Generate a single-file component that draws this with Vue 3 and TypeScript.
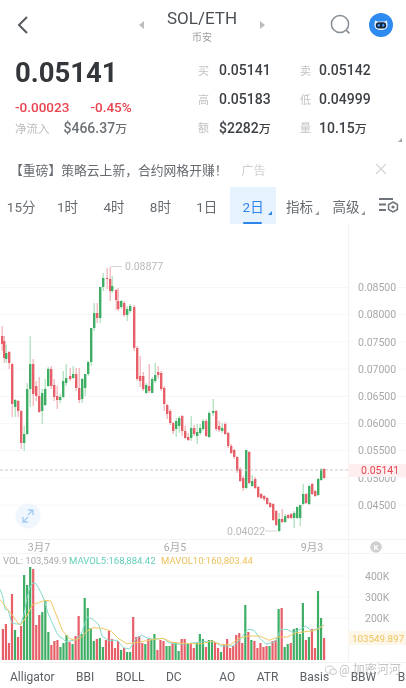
<script setup lang="ts">
type Cdl = [number, 'r' | 'g', number, number, number, number]

// x, colour, body top, body bottom, wick top, wick bottom
const candles: Cdl[] = [
  [1,'r',335,343,325,350],[3,'r',340,357,335,362],[5,'g',352,358,344,362],[8,'r',351,362,350,368],
  [11,'r',363,403,362,416],[14,'g',399,406,398,416],[17,'r',400,410,399,416],[20,'r',410,442,409,448],
  [23,'g',433,442,425,450],[26,'g',388,433,382,434],[29,'g',363,388,335,406],[32,'r',363,393,358,405],
  [35,'r',385,395,380,400],[38,'r',395,411,376,412],[41,'g',392,410,388,423],[44,'g',388,404,378,405],
  [47,'g',368,385,366,386],[50,'r',368,385,365,388],[53,'r',384,396,378,400],[56,'r',395,399,385,408],
  [59,'g',396,399,393,402],[62,'g',380,396,370,397],[65,'g',377,382,363,385],[69,'r',375,378,367,380],
  [72,'g',373,377,365,378],[75,'r',373,387,367,390],[78,'r',387,399,367,402],[81,'g',378,398,377,402],
  [84,'g',373,387,373,395],[87,'g',361,373,360,375],[90,'g',327,361,327,365],[93,'g',312,327,302,330],
  [96,'r',312,317,302,322],[99,'g',286,317,286,322],[102,'g',277,286,272,290],[106,'r',277,278,267,288],
  [109,'r',278,290,266,300],[111,'g',285,290,275,292],[115,'r',289,299,288,309],[117,'r',300,308,287,310],
  [120,'g',300,306,299,308],[123,'r',302,314,300,316],[126,'g',308,314,305,320],[129,'g',305,310,303,312],
  [133,'r',306,347,304,350],[136,'r',347,378,345,380],[139,'r',375,380,355,386],[142,'r',375,388,371,390],
  [145,'g',384,392,382,393],[148,'r',385,390,363,392],[151,'g',378,392,376,392],[154,'g',374,380,362,382],
  [157,'r',371,374,365,378],[160,'r',372,388,370,390],[163,'r',387,403,385,410],[166,'r',404,413,403,418],
  [169,'r',410,422,408,424],[172,'r',422,430,421,433],[175,'g',420,428,417,436],[178,'g',417,425,415,432],
  [181,'r',415,430,414,435],[184,'r',430,437,425,438],[187,'r',436,439,432,440],[190,'g',427,437,415,440],
  [193,'r',427,433,424,435],[196,'g',431,435,423,443],[199,'g',427,432,423,434],[202,'g',420,428,418,430],
  [205,'r',420,435,418,436],[208,'g',412,436,410,437],[212,'g',410,412,398,415],[215,'r',410,428,409,430],
  [218,'r',425,429,420,431],[221,'g',427,430,422,432],[224,'r',423,433,421,434],[227,'r',432,445,431,447],
  [230,'r',445,452,443,453],[233,'r',449,456,448,458],[236,'r',456,470,455,472],[239,'r',468,480,466,481],
  [242,'r',477,487,475,490],[245,'g',449,487,449,488],[248,'r',451,482,450,483],[251,'g',480,485,474,486],
  [254,'r',478,487,476,488],[257,'r',486,496,485,497],[260,'r',493,497,492,498],[263,'r',495,498,494,500],
  [266,'r',497,503,496,504],[269,'r',502,506,501,507],[272,'r',503,519,502,520],[275,'r',510,524,509,525],
  [278,'g',518,530,512,531],[281,'r',518,521,508,522],[284,'g',515,521,513,522],[287,'r',514,517,513,518],
  [290,'r',513,517,512,518],[293,'g',512,517,510,527],[296,'g',506,517,505,518],[299,'g',504,517,504,525],
  [302,'g',493,503,483,504],[305,'r',493,502,492,503],[308,'g',485,503,484,504],[311,'r',483,493,482,494],
  [314,'r',490,495,489,496],[317,'g',478,494,477,495],[320,'g',468,479,467,480],[323,'r',468,477,467,478]
]

const prices = ['0.08500','0.08000','0.07500','0.07000','0.06500','0.06000','0.05500','0.05000','0.04500']
const priceRows = prices.map((text, i) => ({ text, y: 286.5 + i * 27.2 }))

// bar heights in px, one per candle slot
const bars: [string, number][] = [
  ['r',31],['r',36],['r',17],['r',66],['g',30],['r',23],['r',34],['g',85],['g',75],['g',93],['r',91],['r',35],
  ['r',45],['g',48],['g',59],['g',28],['r',15],['r',19],['r',20],['g',13],['g',17],['g',25],['r',18],['g',16],
  ['r',24],['r',44],['g',26],['g',62],['g',52],['g',32],['g',19],['r',21],['g',22],['g',13],['r',20],['r',29],
  ['r',21],['r',12],['r',19],['g',10],['r',12],['g',8],['g',8],['r',43],['r',23],['r',24],['r',17],['g',16],
  ['r',21],['g',21],['g',26],['r',10],['r',20],['r',19],['g',14],['g',14],['r',18],['g',18],['g',9],['r',21],
  ['r',21],['g',17],['r',17],['r',12],['g',17],['g',26],['g',21],['r',13],['g',20],['g',20],['r',18],['r',12],
  ['g',8],['r',15],['r',21],['r',12],['r',14],['r',25],['r',27],['r',17],['g',55],['r',28],['g',20],['r',19],
  ['r',12],['r',17],['r',13],['r',14],['g',14],['r',19],['r',20],['g',51],['r',52],['g',13],['g',16],['r',17],
  ['g',31],['g',32],['g',26],['g',57],['r',20],['g',23],['r',31],['r',12],['g',69],['g',42],['r',22]
]

const barRects = bars.map(([c, h], i) => ({
  x: 1.8 + i * 3.03,
  y: 659 - h,
  h,
  fill: c === 'r' ? '#e65f69' : '#3fae65'
}))

const toLine = (pts: number[][], dx = 0) =>
  pts.map(([x, y]) => `${(dx + x / 3).toFixed(1)},${(550 + y / 3).toFixed(1)}`).join(' ')

const mav5 =
  toLine([[0,115],[8,135],[15,175],[25,178],[35,215],[44,218],[62,220],[72,190],[80,145],[89,110],[98,96],[107,97],[116,112],[125,130],[134,150],[143,185],[152,205],[161,225],[170,245],[179,258],[188,262],[197,272],[207,270],[225,268],[243,250],[252,225],[262,198],[279,205],[297,222],[306,255],[325,268],[352,268],[370,290],[389,294],[407,265],[425,252],[444,262],[462,265],[489,262],[507,275],[534,280],[562,278],[607,272]]) +
  ' ' +
  toLine([[17,272],[35,272],[53,285],[72,285],[90,285],[108,270],[126,245],[135,235],[153,238],[171,262],[189,280],[216,272],[234,235],[252,235],[271,245],[298,232],[308,225],[326,240],[344,232],[362,222]], 203)

const mav10 =
  toLine([[0,145],[15,165],[35,190],[53,215],[62,222],[80,195],[98,160],[116,155],[134,148],[152,150],[170,195],[188,240],[207,262],[225,268],[243,260],[262,240],[279,230],[306,232],[334,240],[352,260],[380,278],[407,275],[434,270],[462,265],[489,262],[516,274],[562,278],[607,278]]) +
  ' ' +
  toLine([[26,270],[53,280],[81,282],[108,262],[135,255],[171,255],[198,268],[225,258],[252,258],[280,245],[298,243],[326,240],[344,235],[362,223]], 203)

const tabs = ['15分', '1时', '4时', '8时', '1日', '2日', '指标', '高级']
const activeTab = '2日'
const cornered = ['2日', '指标', '高级']
const indicators = ['Alligator', 'BBI', 'BOLL', 'DC', 'AO', 'ATR', 'Basis', 'BBW', 'B']
const stats = [
  ['买', '0.05141', '', '卖', '0.05142', ''],
  ['高', '0.05183', '', '低', '0.04999', ''],
  ['额', '$2282', '万', '量', '10.15', '万']
]
</script>

<template>
  <div class="page">
    <header class="topbar">
      <svg class="back" width="16" height="22" viewBox="0 0 16 22">
        <path d="M12 3 4 11l8 8" fill="none" stroke="#555b61" stroke-width="2" />
      </svg>
      <div class="title">
        <i class="tri tri-l"></i>
        <div class="title-text">
          <div class="pair">SOL/ETH</div>
          <div class="venue">币安</div>
        </div>
        <i class="tri tri-r"></i>
      </div>
      <svg class="search" width="24" height="24" viewBox="0 0 24 24">
        <circle cx="11" cy="11" r="8.6" fill="none" stroke="#868e96" stroke-width="1.5" />
        <path d="m17.4 17.4 3 3" stroke="#868e96" stroke-width="1.6" />
      </svg>
      <svg class="bot" width="24" height="24" viewBox="0 0 24 24">
        <circle cx="12" cy="12" r="12" fill="#2f8bf0" />
        <path d="M6 7.5 8.8 8.6h6.4L18 7.5l.6 4.5c0 3-2.6 5-6.6 5s-6.6-2-6.6-5z" fill="#e9f3fd" />
        <rect x="6.8" y="9.2" width="10.4" height="6.2" rx="3" fill="#17263f" />
        <ellipse cx="9.8" cy="12.2" rx="1.2" ry="1.5" fill="#3f9bf5" />
        <ellipse cx="14.2" cy="12.2" rx="1.2" ry="1.5" fill="#3f9bf5" />
      </svg>
    </header>

    <section class="quote">
      <div class="quote-left">
        <div class="last">0.05141</div>
        <div class="change"><span>-0.00023</span><span>-0.45%</span></div>
        <div class="inflow"><span class="inflow-label">净流入</span><span class="inflow-val">$466.37<small>万</small></span></div>
      </div>
      <div class="stats">
        <div v-for="row in stats" :key="row[0]" class="stat-row">
          <span class="stat-k">{{ row[0] }}</span>
          <span class="stat-v">{{ row[1] }}<small v-if="row[2]">{{ row[2] }}</small></span>
          <span class="stat-k stat-k2">{{ row[3] }}</span>
          <span class="stat-v">{{ row[4] }}<small v-if="row[5]">{{ row[5] }}</small></span>
        </div>
      </div>
      <i class="corner corner-quote"></i>
    </section>

    <div class="ad">
      <span class="ad-text">【重磅】策略云上新，合约网格开赚！</span>
      <span class="ad-tag">广告</span>
      <svg class="ad-close" width="12" height="12" viewBox="0 0 12 12">
        <path d="m1 1 10 10M11 1 1 11" stroke="#d4d4d4" stroke-width="1.1" />
      </svg>
    </div>

    <nav class="tabs">
      <div v-for="t in tabs" :key="t" class="tab" :class="{ active: t === activeTab }">
        {{ t }}
        <i v-if="cornered.includes(t)" class="corner"></i>
      </div>
      <svg class="tab-set" width="20" height="16" viewBox="0 0 20 16">
        <path d="M0 2h14M0 7.5h7M0 13h7" stroke="#6e7479" stroke-width="2" />
        <path d="m14 5 4.4 2.5v5L14 15l-4.4-2.5v-5z" fill="none" stroke="#6e7479" stroke-width="1.5" />
        <circle cx="14" cy="10" r="1.6" fill="#6e7479" />
      </svg>
    </nav>

    <svg class="price-chart" width="406" height="329" viewBox="0 223 406 329">
      <line x1="348.5" y1="223" x2="348.5" y2="552" class="frame" />
      <line x1="0" y1="538.5" x2="406" y2="538.5" class="frame" />
      <g v-for="r in priceRows" :key="r.text">
        <line x1="0" :y1="r.y" x2="350" :y2="r.y" class="grid" />
        <line x1="398" :y1="r.y" x2="406" :y2="r.y" class="grid" />
        <text x="358" :y="r.y + 3.7" class="axis">{{ r.text }}</text>
      </g>

      <g v-for="c in candles" :key="c[0]">
        <rect :x="c[0] + 0.6" :y="c[4]" width="1.2" :height="c[5] - c[4]" :fill="c[1] === 'r' ? '#f2b0b5' : '#a8dfb9'" />
        <rect :x="c[0]" :y="c[2]" width="2.4" :height="c[3] - c[2]" :fill="c[1] === 'r' ? '#e65f69' : '#3fae65'" />
      </g>

      <line x1="0" y1="469" x2="348" y2="469" class="last-line" />
      <rect x="348" y="463" width="58" height="13" fill="#fdeff0" />
      <text x="361" y="472.8" class="axis last-label">0.05141</text>

      <line x1="111" y1="265.5" x2="122" y2="265.5" class="mark" />
      <text x="125" y="269" class="axis mark-text">0.08877</text>
      <line x1="265" y1="530" x2="277" y2="530" class="mark" />
      <text x="227" y="533.7" class="axis mark-text">0.04022</text>

      <circle cx="28" cy="515" r="12.5" fill="#f0f6fd" />
      <path d="M23 516v5h5M23 521l5-5M33 509v5M33 509h-5M33 509l-5 5" fill="none" stroke="#a5caf2" stroke-width="1.3" />

      <text x="39" y="550" class="time" text-anchor="middle">3月7</text>
      <text x="175" y="550" class="time" text-anchor="middle">6月5</text>
      <text x="312" y="550" class="time" text-anchor="middle">9月3</text>

      <circle cx="376" cy="546" r="5.8" fill="#cfcfcf" />
      <text x="376" y="549" class="k-mark" text-anchor="middle">K</text>
    </svg>

    <svg class="vol-chart" width="406" height="111" viewBox="0 552 406 111">
      <line x1="0" y1="552.5" x2="406" y2="552.5" class="frame" />
      <line x1="348.5" y1="552" x2="348.5" y2="662" class="frame" />
      <line x1="0" y1="661.5" x2="406" y2="661.5" class="frame" />
      <line x1="0" y1="575" x2="348" y2="575" class="grid" />
      <line x1="0" y1="596" x2="348" y2="596" class="grid" />
      <line x1="0" y1="617" x2="348" y2="617" class="grid" />

      <text x="3" y="563" class="legend vol-legend">VOL: 103,549.9</text>
      <text x="69" y="563" class="legend mav5-legend">MAVOL5:168,884.42</text>
      <text x="161" y="563" class="legend mav10-legend">MAVOL10:160,803.44</text>

      <text x="365" y="579" class="axis">400K</text>
      <text x="365" y="600" class="axis">300K</text>
      <text x="365" y="621" class="axis">200K</text>
      <rect x="348" y="630" width="58" height="14" fill="#fdf7e9" />
      <text x="352" y="641" class="axis vol-last">103549.897</text>

      <rect v-for="(b, i) in barRects" :key="i" :x="b.x" :y="b.y" width="2.2" :height="b.h" :fill="b.fill" />
      <polyline :points="mav5" fill="none" stroke="#84dccb" stroke-width="1" />
      <polyline :points="mav10" fill="none" stroke="#f2c764" stroke-width="1" />
    </svg>

    <footer class="indicators">
      <span v-for="name in indicators" :key="name" class="ind" :class="{ 'ind-wide': name === 'AO' }">{{ name }}</span>
      <div class="watermark">
        <svg width="12" height="11" viewBox="0 0 14 12">
          <ellipse cx="5.5" cy="5" rx="5" ry="4.2" fill="none" stroke="#c4c4c4" />
          <ellipse cx="9.5" cy="7.5" rx="4" ry="3.3" fill="#f8f8f8" stroke="#c4c4c4" />
        </svg>
        <span>@ 加密河河</span>
      </div>
    </footer>
  </div>
</template>

<style>
html,
body {
  margin: 0;
  background: #fff;
}
</style>

<style scoped>
.page {
  width: 406px;
  height: 688px;
  overflow: hidden;
  background: #fff;
  font-family: Roboto, "Noto Sans CJK SC", sans-serif;
  filter: blur(0.5px);
}
small {
  font-size: 0.85em;
}
.topbar {
  height: 50px;
  display: flex;
  align-items: center;
  padding: 0 13px 0 15px;
  box-sizing: border-box;
}
.title {
  flex: 1;
  display: flex;
  justify-content: center;
  align-items: center;
  gap: 23px;
  padding-left: 44px;
}
.title-text {
  text-align: center;
  padding-top: 1px;
}
.pair {
  font-size: 17px;
  line-height: 20px;
  color: #4a4f54;
}
.venue {
  font-size: 10px;
  line-height: 13px;
  margin-top: 3px;
  color: #9a9a9a;
}
.tri {
  width: 0;
  height: 0;
  border-top: 4.5px solid transparent;
  border-bottom: 4.5px solid transparent;
}
.tri-l {
  border-right: 5px solid #bcbcbc;
}
.tri-r {
  border-left: 5px solid #bcbcbc;
}
.search {
  margin-right: 16px;
}
.quote {
  position: relative;
  height: 92px;
  display: flex;
  padding-left: 15px;
}
.quote-left {
  width: 183px;
}
.last {
  font-size: 27.5px;
  line-height: 30px;
  font-weight: 700;
  color: #33373b;
  margin-top: 8px;
}
.change {
  display: flex;
  gap: 21px;
  margin-top: 11px;
  font-size: 13.5px;
  line-height: 16px;
  font-weight: 500;
  color: #e8434f;
}
.inflow {
  display: flex;
  align-items: center;
  gap: 14px;
  margin-top: 4px;
  line-height: 18px;
}
.inflow-label {
  font-size: 11.5px;
  color: #bcbcbc;
}
.inflow-val {
  font-size: 14px;
  font-weight: 500;
  color: #6b7075;
}
.stats {
  margin-top: 6px;
}
.stat-row {
  display: flex;
  align-items: center;
  height: 28.5px;
}
.stat-k {
  width: 21px;
  font-size: 11px;
  color: #c2c2c2;
}
.stat-k2 {
  width: 19px;
}
.stat-v {
  width: 81px;
  font-size: 14px;
  font-weight: 500;
  color: #3c4045;
}
.corner {
  position: absolute;
  right: 4px;
  bottom: 9px;
  width: 0;
  height: 0;
  border-left: 4px solid transparent;
  border-bottom: 4px solid #9a9a9a;
}
.corner-quote {
  right: 4px;
  bottom: 0;
  border-bottom-color: #9fa3a6;
}
.ad {
  position: relative;
  height: 44px;
  display: flex;
  align-items: center;
  padding: 10px 0 0 12px;
  box-sizing: border-box;
}
.ad-text {
  font-size: 12.8px;
  color: #666b70;
  margin-left: -2px;
  margin-right: 14px;
}
.ad-tag {
  font-size: 12px;
  color: #cfcfcf;
}
.ad-close {
  position: absolute;
  right: 19px;
  top: 21px;
}
.tabs {
  height: 37px;
  display: flex;
  margin-left: -2px;
  margin-top: 1px;
  align-items: stretch;
}
.tab {
  position: relative;
  flex: 0 0 46.4px;
  display: flex;
  align-items: center;
  justify-content: center;
  font-size: 13.5px;
  color: #666b70;
  box-sizing: border-box;
}
.tab.active {
  background: #e6f2fd;
  color: #2e86ea;
}
.tab.active .corner {
  border-bottom-color: #2e86ea;
}
.tab.active::after {
  content: "";
  position: absolute;
  left: 13px;
  right: 14px;
  bottom: 0;
  height: 2px;
  background: #2e86ea;
  border-radius: 1px;
}
.tab-set {
  margin: 10px 0 0 10px;
}
.price-chart,
.vol-chart {
  display: block;
}
.frame {
  stroke: #f3f3f3;
  stroke-width: 1;
}
.grid {
  stroke: #f6f6f6;
  stroke-width: 1;
}
.axis {
  font-size: 10.5px;
  fill: #a8a8a8;
}
.last-line {
  stroke: #c9c9c9;
  stroke-width: 1;
  stroke-dasharray: 3 2;
}
.last-label {
  fill: #e8434f;
}
.mark {
  stroke: #d4d4d4;
  stroke-width: 1;
}
.mark-text {
  fill: #b9b9b9;
}
.time {
  font-size: 10.5px;
  fill: #ababab;
}
.k-mark {
  font-size: 8px;
  font-weight: 700;
  fill: #fff;
}
.legend {
  font-size: 9.5px;
}
.vol-legend {
  fill: #aaa;
}
.mav5-legend {
  fill: #62cfb9;
}
.mav10-legend {
  fill: #eec15a;
}
.vol-last {
  font-size: 9.8px;
  fill: #eec15a;
}
.indicators {
  position: relative;
  height: 25px;
  display: flex;
  align-items: center;
  padding-left: 10px;
  gap: 21.5px;
  font-size: 12px;
  color: #5a5f64;
  white-space: nowrap;
}
.ind-wide {
  margin-left: 16px;
}
.watermark {
  position: absolute;
  left: 325px;
  top: -1px;
  display: flex;
  align-items: center;
  gap: 2px;
  font-size: 12px;
  line-height: 14px;
  color: rgba(170, 170, 170, 0.7);
}
</style>
